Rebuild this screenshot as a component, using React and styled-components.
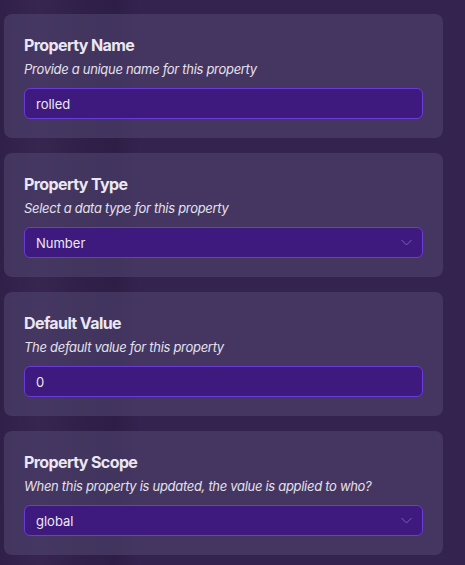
import styled, { createGlobalStyle } from "styled-components";

const GlobalStyle = createGlobalStyle`
  html, body {
    margin: 0;
    padding: 0;
    background: #35234f;
  }
  * {
    box-sizing: border-box;
  }
`

const Page = styled.div`
  width: 465px;
  height: 565px;
  overflow: hidden;
  background:
    linear-gradient(90deg, rgba(40, 26, 60, 0.35) 0px, rgba(60, 44, 84, 0.3) 40px, rgba(44, 30, 66, 0.4) 75px, rgba(38, 24, 60, 0.45) 115px, rgba(53, 35, 79, 0) 140px),
    #35234f;
  font-family: Inter, "Noto Sans", sans-serif;
  display: flex;
  flex-direction: column;
  gap: 15px;
  padding: 14px 22px 0 4px;
`

const Card = styled.section`
  background: rgba(78, 66, 108, 0.62);
  border-radius: 8px;
  padding: 21px 20px 19px;
  display: flex;
  flex-direction: column;
`

const Title = styled.h3`
  margin: 0;
  font-size: 16px;
  line-height: 20px;
  font-weight: 700;
  letter-spacing: -0.6px;
  color: #ebe7f2;
`

const Hint = styled.p`
  margin: 5px 0 10px;
  font-size: 13px;
  line-height: 18px;
  font-style: italic;
  letter-spacing: -0.3px;
  color: #e4e0ec;
`

const Field = styled.div`
  height: 31px;
  background: #3f1a7e;
  border: 1px solid #6a3bd6;
  border-radius: 6px;
  display: flex;
  align-items: center;
  justify-content: space-between;
  padding: 0 10px 0 11px;
  font-size: 13px;
  color: #ece8f4;
`

const Chevron = () => (
  <svg width="11" height="7" viewBox="0 0 11 7" fill="none">
    <path d="M0.5 1 L5.5 6 L10.5 1" stroke="#7a60b8" strokeWidth="1" />
  </svg>
)

const props = [
  { title: "Property Name", hint: "Provide a unique name for this property", value: "rolled" },
  { title: "Property Type", hint: "Select a data type for this property", value: "Number", select: true },
  { title: "Default Value", hint: "The default value for this property", value: "0" },
  { title: "Property Scope", hint: "When this property is updated, the value is applied to who?", value: "global", select: true },
]

export default function App() {
  return (
    <>
      <GlobalStyle />
      <Page>
        {props.map((p) => (
          <Card key={p.title}>
            <Title>{p.title}</Title>
            <Hint>{p.hint}</Hint>
            <Field>
              <span>{p.value}</span>
              {p.select && <Chevron />}
            </Field>
          </Card>
        ))}
      </Page>
    </>
  )
}
